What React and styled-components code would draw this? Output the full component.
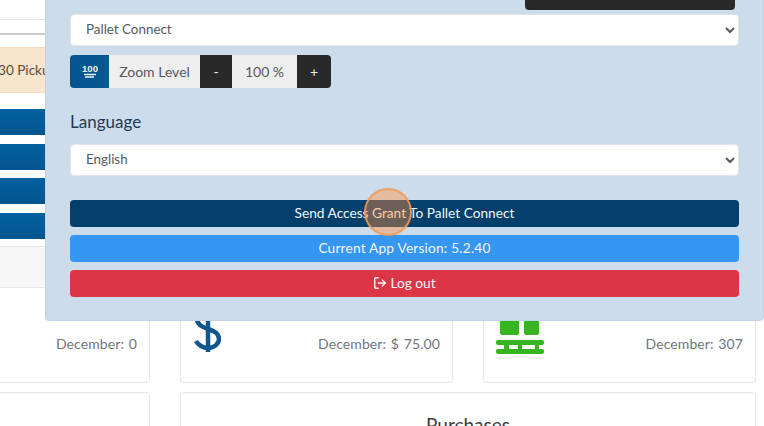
import styled, { createGlobalStyle } from "styled-components";
import { LogOut } from "lucide-react";

const GlobalStyle = createGlobalStyle`
    html, body {
        margin: 0;
        padding: 0;
        background: #fff;
    }
    * {
        box-sizing: border-box;
    }
`;

const Page = styled.div`
    position: relative;
    width: 764px;
    height: 426px;
    overflow: hidden;
    background: #fff;
    font-family: "Lato", "Noto Sans", sans-serif;
    color: #4a5057;
`;

const LeftStrip = styled.div`
    width: 45px;
    padding-top: 19px;
    overflow: hidden;
`;

const Rule = styled.div`
    height: ${(p) => p.$height}px;
    border-top: ${(p) => p.$thick}px solid ${(p) => p.$color};
`;

const Alert = styled.div`
    width: 60px;
    height: 46px;
    margin-bottom: 16px;
    display: flex;
    align-items: center;
    background: #f8e5ce;
    border-top: 1px solid #f2dcc0;
    border-bottom: 1px solid #f2dcc0;
    font-size: 13.6px;
    color: #5d4a33;
    white-space: nowrap;
    text-indent: -2px;
`;

const BlueBar = styled.div`
    height: 26px;
    margin-bottom: 8.5px;
    background: linear-gradient(#03609f, #04558f);

    &:last-child {
        margin-bottom: 7.5px;
    }
`;

const Grid = styled.div`
    display: grid;
    grid-template-columns: 273px 273px 273px;
    column-gap: 30px;
    row-gap: 9px;
    margin-left: -123px;
`;

const Card = styled.div`
    grid-column: span ${(p) => p.$span || 1};
    height: ${(p) => p.$height}px;
    background: #fff;
    border: 1px solid #e4e6e8;
    border-radius: 4px;
    overflow: hidden;
`;

const CardHeader = styled.div`
    height: 41px;
    background: #f7f7f7;
    border-bottom: 1px solid #e6e7e8;
`;

const CardBody = styled.div`
    display: flex;
    justify-content: space-between;
    align-items: flex-end;
    height: 66px;
    padding: 0 12px;
`;

const IconSlot = styled.div`
    display: flex;
    align-items: flex-end;
    width: 50px;
    height: 50px;
`;

const StatText = styled.span`
    margin-left: auto;
    font-size: 14px;
    line-height: 20px;
    color: #6f757b;
    word-spacing: 1px;
    letter-spacing: 0.1px;
`;

const CardTitle = styled.h3`
    margin: 20px 0 0;
    text-align: center;
    font-size: 19px;
    font-weight: 400;
    color: #3b3f44;
`;

const Panel = styled.div`
    position: absolute;
    top: -20px;
    left: 45px;
    right: 0;
    height: 341px;
    padding: 0 24px;
    background: #cddceb;
    border: 1px solid #c3d4e6;
    border-radius: 4px;
    display: flex;
    flex-direction: column;
`;

const TopButton = styled.div`
    align-self: flex-end;
    width: 210px;
    height: 29px;
    margin-right: 4px;
    background: #292929;
    border-radius: 0 0 4px 4px;
    flex-shrink: 0;
`;

const Select = styled.select`
    width: 669px;
    height: 32px;
    flex-shrink: 0;
    margin-top: ${(p) => p.$top || 0}px;
    padding: 0 11px 2px;
    background: #fff;
    border: 1px solid #dfe5ea;
    border-radius: 4px;
    font-family: inherit;
    font-size: 13.4px;
    color: #55595e;
`;

const ZoomRow = styled.div`
    display: flex;
    width: 261px;
    height: 33px;
    margin-top: 9px;
    border-radius: 4px;
    overflow: hidden;
    font-size: 14px;
    flex-shrink: 0;
`;

const ZoomCell = styled.div`
    display: flex;
    align-items: center;
    justify-content: center;
    width: ${(p) => p.$width}px;
    padding-bottom: 1px;
    background: ${(p) => p.$bg};
    color: ${(p) => p.$fg};
`;

const LanguageLabel = styled.label`
    margin: 23px 0 11px;
    height: 22px;
    line-height: 22px;
    font-size: 17px;
    color: #1f3a55;
`;

const WideButton = styled.div`
    display: flex;
    align-items: center;
    justify-content: center;
    gap: 3px;
    width: 669px;
    height: 27px;
    margin-top: ${(p) => p.$top}px;
    padding-bottom: 2px;
    background: ${(p) => p.$bg};
    border-radius: 4px;
    color: #f2f6fa;
    font-size: 13.7px;
    letter-spacing: ${(p) => p.$spacing || 0}px;
    flex-shrink: 0;
`;

const ClickMark = styled.div`
    position: absolute;
    left: 364px;
    top: 188px;
    width: 48px;
    height: 48px;
    border-radius: 50%;
    background: rgba(255, 140, 60, 0.42);
    border: 2px solid rgba(242, 155, 85, 0.85);
`;

function HundredIcon() {
    return (
        <svg width="16" height="16" viewBox="0 0 16 16">
            <text x="8" y="9" textAnchor="middle" fontSize="9.5" fontWeight="700" fontFamily="Liberation Sans" fill="#eef4fa">
                100
            </text>
            <path d="M2 11.5h12M3 14h9" stroke="#eef4fa" strokeWidth="1.4" />
        </svg>
    );
}

function DollarIcon() {
    return (
        <svg width="28" height="48" viewBox="-2 0 28 48" fill="none" stroke="#11568f" strokeWidth="4.5">
            <path d="M23 12C20 7 16 5 13 5C6 5 2 9 2 13C2 19 8 21 13 23C19 25 24 27 24 33C24 38 19 42 13 42C8 42 3 39 1 35" />
            <path d="M13 0V46" />
        </svg>
    );
}

function PalletIcon() {
    return (
        <svg width="48" height="40" viewBox="0 0 48 40" fill="#36b521">
            <rect x="4" y="0" width="19" height="21" rx="2" />
            <rect x="28" y="6" width="15" height="15" rx="2" />
            <rect x="0" y="26" width="48" height="5" rx="2" />
            <rect x="8" y="30" width="5" height="6" />
            <rect x="22" y="30" width="4" height="6" />
            <rect x="39" y="30" width="4" height="6" />
            <rect x="0" y="35" width="48" height="5" rx="2" />
        </svg>
    );
}

function App() {
    return (
        <>
            <GlobalStyle />
            <Page>
                <LeftStrip>
                    <Rule $height={14} $thick={1} $color="#e2e4e6" />
                    <Rule $height={14} $thick={2} $color="#c9cccf" />
                    <Alert>30 Pickups</Alert>
                    <BlueBar />
                    <BlueBar />
                    <BlueBar />
                    <BlueBar />
                </LeftStrip>

                <Grid>
                    <Card $height={137}>
                        <CardHeader />
                        <CardBody>
                            <StatText>December: 0</StatText>
                        </CardBody>
                    </Card>
                    <Card $height={137}>
                        <CardHeader />
                        <CardBody>
                            <IconSlot>
                                <DollarIcon />
                            </IconSlot>
                            <StatText>December: $ 75.00</StatText>
                        </CardBody>
                    </Card>
                    <Card $height={137}>
                        <CardHeader />
                        <CardBody>
                            <IconSlot>
                                <PalletIcon />
                            </IconSlot>
                            <StatText>December: 307</StatText>
                        </CardBody>
                    </Card>
                    <Card $height={120} />
                    <Card $height={120} $span={2}>
                        <CardTitle>Purchases</CardTitle>
                    </Card>
                </Grid>

                <Panel>
                    <TopButton />
                    <Select $top={4} defaultValue="Pallet Connect">
                        <option>Pallet Connect</option>
                    </Select>
                    <ZoomRow>
                        <ZoomCell $width={39} $bg="#05558f" $fg="#fff">
                            <HundredIcon />
                        </ZoomCell>
                        <ZoomCell $width={91} $bg="#eeeeee" $fg="#55595e">Zoom Level</ZoomCell>
                        <ZoomCell $width={32} $bg="#292929" $fg="#eee">-</ZoomCell>
                        <ZoomCell $width={65} $bg="#eeeeee" $fg="#55595e">100 %</ZoomCell>
                        <ZoomCell $width={34} $bg="#292929" $fg="#eee">+</ZoomCell>
                    </ZoomRow>
                    <LanguageLabel>Language</LanguageLabel>
                    <Select defaultValue="English">
                        <option>English</option>
                    </Select>
                    <WideButton $top={24} $bg="#033f6b">Send Access Grant To Pallet Connect</WideButton>
                    <WideButton $top={8} $bg="#3597f2" $spacing={0.2}>Current App Version: 5.2.40</WideButton>
                    <WideButton $top={8} $bg="#dc3545">
                        <LogOut size={14} strokeWidth={2.4} />
                        Log out
                    </WideButton>
                </Panel>

                <ClickMark />
            </Page>
        </>
    );
}

export default App;
